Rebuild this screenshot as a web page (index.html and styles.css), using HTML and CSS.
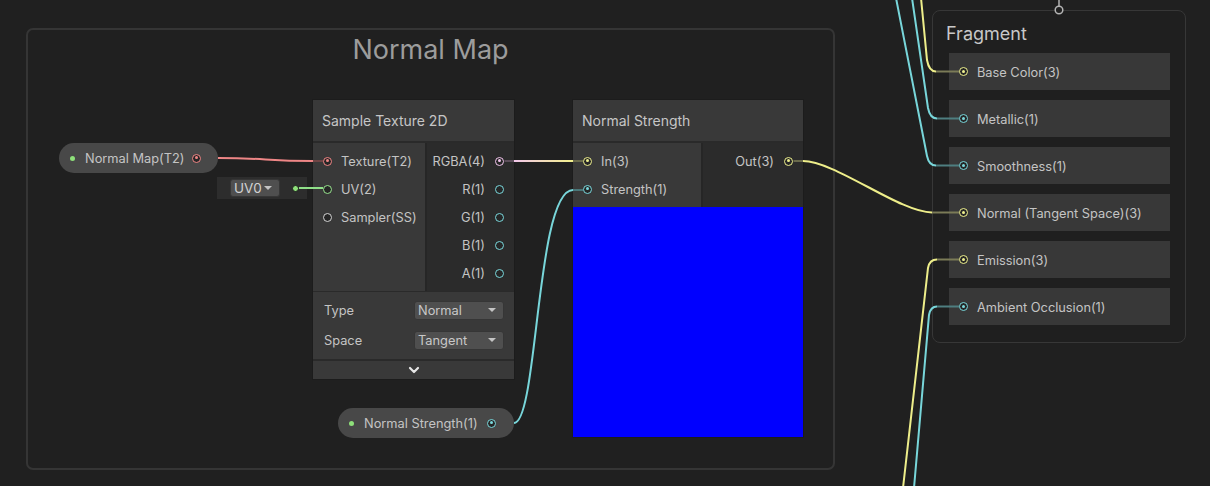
FILE: index.html
```html
<!DOCTYPE html>
<html>
<head>
<meta charset="utf-8">
<link rel="stylesheet" href="styles.css">
</head>
<body>
<div class="canvas">
  <div class="group"><div class="group-title">Normal Map</div></div>

  <div class="prop prop-map">
    <span class="pdot"></span><span class="plabel">Normal Map(T2)</span><span class="port on c-t2"></span>
  </div>

  <div class="uv-node">
    <div class="dropdown dd-uv"><span>UV0</span><span class="tri"></span></div>
    <span class="uv-dot"></span>
  </div>

  <div class="node node-sample">
    <div class="node-header">Sample Texture 2D</div>
    <div class="node-body">
      <div class="inputs in-sample">
        <div class="row in"><span class="port on c-t2"></span><span>Texture(T2)</span></div>
        <div class="row in"><span class="port c-v2"></span><span>UV(2)</span></div>
        <div class="row in"><span class="port c-ss"></span><span>Sampler(SS)</span></div>
      </div>
      <div class="outputs">
        <div class="row out"><span>RGBA(4)</span><span class="port on c-v4"></span></div>
        <div class="row out"><span>R(1)</span><span class="port c-v1"></span></div>
        <div class="row out"><span>G(1)</span><span class="port c-v1"></span></div>
        <div class="row out"><span>B(1)</span><span class="port c-v1"></span></div>
        <div class="row out"><span>A(1)</span><span class="port c-v1"></span></div>
      </div>
    </div>
    <div class="settings">
      <div class="setting"><span>Type</span><div class="dropdown dd-set"><span>Normal</span><span class="tri"></span></div></div>
      <div class="setting"><span>Space</span><div class="dropdown dd-set"><span>Tangent</span><span class="tri"></span></div></div>
    </div>
    <div class="collapse">
      <svg width="12" height="8" viewBox="0 0 12 8"><path d="M2 2 L6 6 L10 2" fill="none" stroke="#e6e6e6" stroke-width="2.2" stroke-linecap="round" stroke-linejoin="round"/></svg>
    </div>
  </div>

  <div class="node node-strength">
    <div class="node-header">Normal Strength</div>
    <div class="node-body">
      <div class="inputs in-strength">
        <div class="row in"><span class="port on c-v3"></span><span>In(3)</span></div>
        <div class="row in"><span class="port on c-v1"></span><span>Strength(1)</span></div>
      </div>
      <div class="outputs">
        <div class="row out"><span>Out(3)</span><span class="port on c-v3"></span></div>
      </div>
    </div>
    <div class="preview"></div>
  </div>

  <div class="prop prop-strength">
    <span class="pdot"></span><span class="plabel">Normal Strength(1)</span><span class="port on c-v1"></span>
  </div>

  <div class="fragment">
    <div class="frag-title">Fragment</div>
    <div class="slot"><span class="port on c-v3"></span><span>Base Color(3)</span></div>
    <div class="slot"><span class="port on c-v1"></span><span>Metallic(1)</span></div>
    <div class="slot"><span class="port on c-v1"></span><span>Smoothness(1)</span></div>
    <div class="slot"><span class="port on c-v3"></span><span>Normal (Tangent Space)(3)</span></div>
    <div class="slot"><span class="port on c-v3"></span><span>Emission(3)</span></div>
    <div class="slot"><span class="port on c-v1"></span><span>Ambient Occlusion(1)</span></div>
  </div>

  <svg class="wires" width="1210" height="486" viewBox="0 0 1210 486">
    <defs>
      <linearGradient id="g1" gradientUnits="userSpaceOnUse" x1="514" y1="0" x2="573" y2="0">
        <stop offset="0" stop-color="#f3c8ec"/>
        <stop offset="1" stop-color="#f2f08c"/>
      </linearGradient>
    </defs>
    <g fill="none" stroke-width="2" stroke-linecap="butt">
      <path d="M218 158 C 265 158, 266 161, 313 161" stroke="#ee8686"/>
      <path d="M313 161 L323 161" stroke="#6e4545"/>
      <path d="M299 188 L323 188" stroke="#8fdf88"/>
      <path d="M504.5 161 L514 161" stroke="#5c4e5a"/>
      <path d="M514 161 L573 161" stroke="url(#g1)"/>
      <path d="M573 161 L583 161" stroke="#6a6a4c"/>
      <path d="M514 423 C 538 423, 536 190, 573 190" stroke="#78d6da"/>
      <path d="M573 190 L583 190" stroke="#4a7678"/>
      <path d="M793.5 161 L803 161" stroke="#6a6a4c"/>
      <path d="M803 161 C 835 161, 900 212.5, 932 212.5" stroke="#eeee8a"/>
      <path d="M932 212.5 L959 212.5" stroke="#7b7b57"/>

      <path d="M921 -2 L927 60 Q 929 71.5 936 71.5" stroke="#eeee8a"/>
      <path d="M936 71.5 L959 71.5" stroke="#7b7b57"/>
      <path d="M912 -2 L928 108 Q 930 118.5 937 118.5" stroke="#78d6da"/>
      <path d="M937 118.5 L959 118.5" stroke="#4e7e80"/>
      <path d="M896 -2 L927 156 Q 929 165.5 936 165.5" stroke="#78d6da"/>
      <path d="M936 165.5 L959 165.5" stroke="#4e7e80"/>
      <path d="M903 488 L928 268 Q 929.5 259.5 937 259.5" stroke="#eeee8a"/>
      <path d="M937 259.5 L959 259.5" stroke="#7b7b57"/>
      <path d="M914 488 L929 315 Q 930.5 306.5 937 306.5" stroke="#78d6da"/>
      <path d="M937 306.5 L959 306.5" stroke="#4e7e80"/>

      <path d="M1059 0 L1059 6" stroke="#b4b4b4" stroke-width="1.5"/>
      <circle cx="1059" cy="10" r="3.8" stroke="#b4b4b4" stroke-width="1.5" fill="#202020"/>
    </g>
  </svg>
</div>
</body>
</html>
```
FILE: styles.css
```css
* { box-sizing: border-box; }

body {
  margin: 0;
  background: #202020;
  font-family: Inter, "Noto Sans", "Liberation Sans", sans-serif;
}

.canvas {
  position: relative;
  width: 1210px;
  height: 486px;
  overflow: hidden;
  background: #202020;
}

/* group */
.group {
  position: absolute;
  left: 26px;
  top: 28px;
  width: 809px;
  height: 442px;
  border: 2px solid #353535;
  border-radius: 7px;
}
.group-title {
  text-align: center;
  font-size: 27px;
  line-height: 32px;
  padding-top: 4px;
  color: #9c9c9c;
}

/* ports */
.port {
  position: relative;
  flex: none;
  width: 9px;
  height: 9px;
  border-radius: 50%;
  border: 1.5px solid currentColor;
  background: #262626;
}
.port.on::after {
  content: "";
  position: absolute;
  left: 1.5px;
  top: 1.5px;
  width: 3px;
  height: 3px;
  border-radius: 50%;
  background: currentColor;
}
.c-t2 { color: #f18686; }
.c-v4 { color: #f3c6ee; }
.c-v3 { color: #eef08e; }
.c-v1 { color: #7ad8dc; }
.c-v2 { color: #98e48e; }
.c-ss { color: #d4d4d4; }

/* property pills */
.prop {
  position: absolute;
  height: 30px;
  border-radius: 15px;
  background: #484848;
  display: flex;
  align-items: center;
  font-size: 12.8px;
  color: #c4c4c4;
  padding-left: 11px;
}
.pdot {
  width: 5px;
  height: 5px;
  border-radius: 50%;
  background: #8ee07a;
  flex: none;
}
.plabel { margin-left: 10px; flex: 1; padding-top: 1px; }
.prop-map { left: 59px; top: 143px; width: 159px; padding-right: 17px; }
.prop-strength { left: 338px; top: 408px; width: 176px; padding-right: 18px; }

/* uv node */
.uv-node {
  position: absolute;
  left: 217px;
  top: 177px;
  width: 90px;
  height: 22px;
  background: #2d2d2d;
  display: flex;
  align-items: center;
  padding-left: 13px;
}
.dropdown {
  display: flex;
  align-items: center;
  justify-content: space-between;
  background: #4f4f4f;
  border: 1px solid #363636;
  border-radius: 3px;
  color: #c8c8c8;
}
.tri {
  width: 0;
  height: 0;
  border-left: 4px solid transparent;
  border-right: 4px solid transparent;
  border-top: 4px solid #c4c4c4;
}
.dd-uv {
  width: 50px;
  height: 18px;
  font-size: 13.5px;
  padding: 0 7px 0 3px;
  color: #d2d2d2;
}
.uv-dot {
  width: 7px;
  height: 7px;
  border-radius: 50%;
  background: #8ee07a;
  border: 1.5px solid #1c1c1c;
  margin-left: 12px;
}

/* nodes */
.node {
  position: absolute;
  background: #2a2a2a;
  box-shadow: 0 0 0 1px #1c1c1c;
}
.node-sample { left: 313px; top: 100px; width: 201px; }
.node-strength { left: 573px; top: 100px; width: 230px; }

.node-header {
  height: 43px;
  background: #393939;
  border-bottom: 2px solid #2a2a2a;
  display: flex;
  align-items: center;
  padding-left: 9px;
  font-size: 14px;
  color: #c6c6c6;
}
.node-body { display: flex; }
.inputs {
  background: #393939;
  padding: 4px 0;
}
.in-sample { width: 112px; }
.in-strength { width: 128px; }
.outputs {
  flex: 1;
  background: #2b2b2b;
  border-left: 2px solid #262626;
  padding: 4px 0;
}
.row {
  height: 28px;
  display: flex;
  align-items: center;
  font-size: 12.8px;
  color: #c4c4c4;
}
.row span:not(.port) { padding-top: 1px; }
.row.in { padding-left: 10px; gap: 9px; }
.row.out { justify-content: flex-end; padding-right: 10px; gap: 10px; }

.settings {
  background: #393939;
  border-top: 1px solid #2a2a2a;
  padding: 3px 10px 4px 11px;
}
.setting {
  height: 30px;
  display: flex;
  align-items: center;
  justify-content: space-between;
  font-size: 12.8px;
  color: #c4c4c4;
}
.dd-set {
  width: 90px;
  height: 19px;
  font-size: 12.8px;
  padding: 0 7px 0 3px;
}
.collapse {
  height: 20px;
  background: #393939;
  border-top: 2px solid #2a2a2a;
  display: flex;
  align-items: center;
  justify-content: center;
}
.collapse svg { display: block; }

.preview {
  height: 230px;
  background: #0000ff;
}

/* fragment block */
.fragment {
  position: absolute;
  left: 932px;
  top: 10px;
  width: 254px;
  height: 333px;
  border: 1px solid #373737;
  border-radius: 8px;
  background: #1f1f1f;
}
.frag-title {
  height: 42px;
  display: flex;
  align-items: center;
  padding: 2px 0 0 13px;
  font-size: 18px;
  color: #c8c8c8;
}
.slot {
  margin-left: 16px;
  width: 221px;
  height: 37px;
  margin-bottom: 10px;
  background: #383838;
  display: flex;
  align-items: center;
  gap: 9px;
  padding-left: 10px;
  font-size: 12.8px;
  color: #c4c4c4;
}
.slot span:not(.port) { padding-top: 1px; }

.wires {
  position: absolute;
  left: 0;
  top: 0;
  pointer-events: none;
}
```
